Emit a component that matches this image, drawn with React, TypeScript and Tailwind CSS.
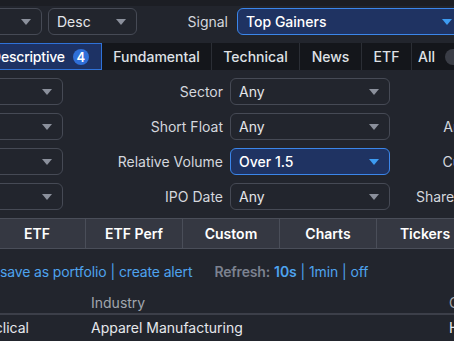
import React from 'react';

const Caret = ({ blue }: { blue?: boolean }) => (
  <svg width="10" height="6" viewBox="0 0 10 6" className="shrink-0">
    <path d="M0 0 L10 0 L5 6 Z" fill={blue ? '#3d9cf2' : '#8b909c'} />
  </svg>
);

const Select = ({ value, className, active }: { value?: string; className: string; active?: boolean }) => (
  <div
    className={`h-[27px] shrink-0 flex items-center justify-between pl-[8px] pr-[10px] rounded-[6px] border text-[14px] ${
      active ? 'bg-[#1f3362] border-[#3b86ea] text-white' : 'border-[#464a55] text-[#e4e6ea]'
    } ${className}`}
  >
    <span className={active ? 'font-medium' : ''}>{value}</span>
    <Caret blue={active} />
  </div>
);

const ROWS = [
  { mid: 'Sector', value: 'Any', right: 'Industry' },
  { mid: 'Short Float', value: 'Any', right: 'Analyst Recom.' },
  { mid: 'Relative Volume', value: 'Over 1.5', right: 'Current Volume', active: true },
  { mid: 'IPO Date', value: 'Any', right: 'Shares Outstanding' },
];

const VIEWS = ['ETF', 'ETF Perf', 'Custom', 'Charts', 'Tickers'];

export default function App() {
  return (
    <div className="w-[454px] h-[341px] overflow-hidden bg-[#22252d] text-[14px] font-['Inter','Liberation_Sans',sans-serif]">
      <div className="h-[6px] bg-[#1c1e24]" />

      {/* order + signal */}
      <div className="flex items-center mt-[2px]">
        <Select className="w-[60px] -ml-[18px]" />
        <Select value="Desc" className="w-[89px] ml-[6px]" />
        <div className="w-[91px] shrink-0 text-right text-[#d4d7dd]">Signal</div>
        <Select value="Top Gainers" className="w-[226px] ml-[9px]" active />
      </div>

      {/* filter tabs */}
      <div className="flex h-[27px] mt-[8px] bg-[#14161b] text-[#dfe1e6] font-medium">
        <div className="-ml-[22px] w-[124px] shrink-0 flex items-center px-[12px] gap-[8px] bg-[#1d3264] border border-[#2f72d8] text-white">
          <span className="tracking-[-0.2px]">Descriptive</span>
          <span className="w-[20px] h-[16px] rounded-full bg-[#2f6fd8] text-[13px] font-semibold leading-[16px] text-center">4</span>
        </div>
        <div className="w-[110px] shrink-0 flex items-center justify-center border-r border-[#2b2e35]">Fundamental</div>
        <div className="w-[88px] shrink-0 flex items-center justify-center border-r border-[#2b2e35]">Technical</div>
        <div className="w-[62px] shrink-0 flex items-center justify-center border-r border-[#2b2e35]">News</div>
        <div className="w-[50px] shrink-0 flex items-center justify-center border-r border-[#2b2e35]">ETF</div>
        <div className="shrink-0 flex items-center pl-[6px] gap-[10px]">
          <span>All</span>
          <span className="w-[21px] h-[16px] rounded-full bg-[#3a3d46]" />
        </div>
      </div>

      {/* filters */}
      <div className="flex flex-col gap-[8px] mt-[8px]">
        {ROWS.map(r => (
          <div key={r.mid} className="flex items-center h-[27px]">
            <Select className="w-[103px] -ml-[40px]" />
            <div className="w-[160px] shrink-0 text-right text-[#d4d7dd]">{r.mid}</div>
            <Select value={r.value} className="w-[160px] ml-[7px]" active={r.active} />
            <div className="w-[156px] shrink-0 text-right text-[#d4d7dd] whitespace-nowrap">{r.right}</div>
          </div>
        ))}
      </div>

      {/* views */}
      <div className="flex h-[31px] mt-[8px] bg-[#353842] border-y border-[#4a4e59] text-white font-semibold">
        <div className="-ml-[11px] w-[97px] shrink-0 flex items-center justify-center border-r border-[#4a4e59]">ETF</div>
        {VIEWS.slice(1).map(v => (
          <div key={v} className="w-[97px] shrink-0 flex items-center justify-center border-r border-[#4a4e59]">{v}</div>
        ))}
      </div>

      {/* links */}
      <div className="flex items-center h-[20px] mt-[12px] whitespace-nowrap text-[#4ea3ee] tracking-[-0.15px]">
        <span>save as portfolio</span>
        <span className="mx-[4px]">|</span>
        <span>create alert</span>
        <span className="ml-[22px] text-[#7c8290] font-semibold">Refresh:</span>
        <span className="ml-[4px] font-semibold">10s</span>
        <span className="mx-[4px]">|</span>
        <span>1min</span>
        <span className="mx-[4px]">|</span>
        <span>off</span>
      </div>

      {/* table */}
      <div className="flex items-center h-[24px] mt-[10px] border-b-2 border-[#3c3f49] text-[#a1a5ae] whitespace-nowrap">
        <div className="-ml-[91px] w-[182px] shrink-0">Sector</div>
        <div className="w-[358px] shrink-0">Industry</div>
        <div className="shrink-0">Country</div>
      </div>
      <div className="flex items-center h-[24px] text-[#e6e8ec] whitespace-nowrap">
        <div className="-ml-[120px] w-[211px] shrink-0 text-right pr-[62px]">Consumer Cyclical</div>
        <div className="w-[358px] shrink-0">Apparel Manufacturing</div>
        <div className="shrink-0">Hong Kong</div>
      </div>
    </div>
  );
}
